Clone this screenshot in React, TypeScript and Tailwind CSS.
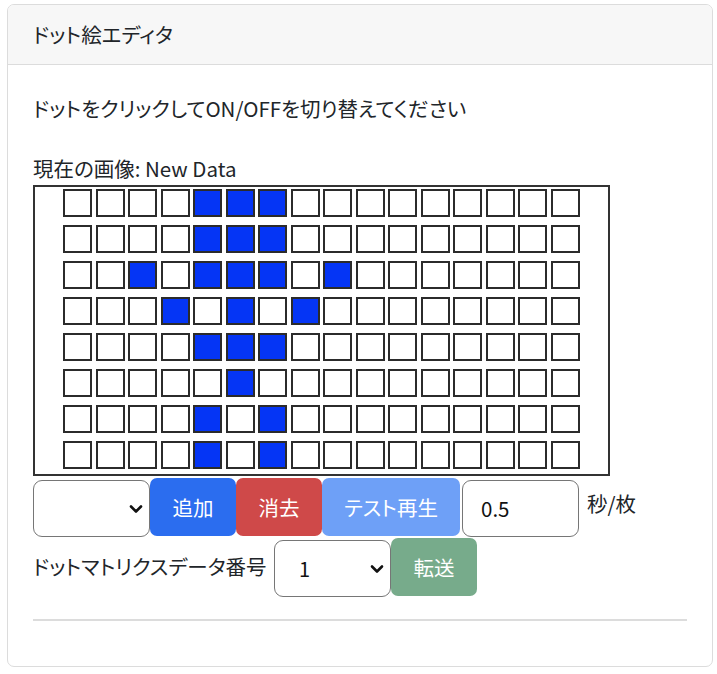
const ON: number[][] = [
  [4, 5, 6],
  [4, 5, 6],
  [2, 4, 5, 6, 8],
  [3, 5, 7],
  [4, 5, 6],
  [5],
  [4, 6],
  [4, 6],
];

function Chevron() {
  return (
    <svg width="14" height="10" viewBox="0 0 14 10" className="shrink-0">
      <path d="M2 2.5 L7 7.5 L12 2.5" fill="none" stroke="#111" strokeWidth="2.6" strokeLinecap="round" strokeLinejoin="round" />
    </svg>
  );
}

function Select({ value, className }: { value?: string; className?: string }) {
  return (
    <div
      className={`flex items-center justify-between rounded-[9px] border border-[#767676] bg-white pl-[24px] pr-[6px] ${className ?? ""}`}
    >
      <span className="text-[20px] text-[#111]">{value ?? ""}</span>
      <Chevron />
    </div>
  );
}

function DotGrid() {
  return (
    <div className="flex h-[291px] w-[577px] flex-col items-center gap-y-[8px] border-2 border-[#333] bg-white pt-[2px]">
      {ON.map((row, r) => (
        <div key={r} className="flex gap-x-[3.5px]">
          {Array.from({ length: 16 }, (_, c) => (
            <div
              key={c}
              className={`h-[28px] w-[29px] border-2 border-[#2b2b2b] ${row.includes(c) ? "bg-[#0535f5]" : "bg-white"}`}
            />
          ))}
        </div>
      ))}
    </div>
  );
}

export default function App() {
  return (
    <div className="min-h-[674px] bg-white pl-[7px] pt-[4px] font-['Noto_Sans_CJK_JP','Noto_Sans',sans-serif] text-[20.5px] text-[#212529] [font-feature-settings:'palt']">
      <div className="h-[663px] w-[706px] overflow-hidden rounded-[7px] border border-[#dcdcdc]">
        <div className="flex h-[60px] items-center border-b border-[#dcdcdc] bg-[#f7f7f7] px-[25px]">
          ドット絵エディタ
        </div>
        <div className="px-[25px] pt-[28px]">
          <p className="whitespace-nowrap leading-[30px]">ドットをクリックしてON/OFFを切り替えてください</p>
          <p className="mt-[30px] whitespace-nowrap leading-[30px]">現在の画像: New Data</p>
          <div className="mt-[2px]">
            <DotGrid />
          </div>
          <div className="flex items-start">
            <Select className="mt-[4px] h-[57px] w-[117px]" />
            <button className="mt-[2px] h-[58px] w-[86px] rounded-[7px] bg-[#2b6def] text-white">追加</button>
            <button className="mt-[2px] h-[58px] w-[86px] rounded-[7px] bg-[#cf4949] text-white">消去</button>
            <button className="mt-[2px] h-[58px] w-[138px] rounded-[7px] bg-[#6ea0f7] text-white">テスト再生</button>
            <div className="ml-[2px] mt-[4px] flex h-[57px] w-[117px] items-center rounded-[9px] border border-[#767676] bg-white px-[18px] text-[#111]">
              0.5
            </div>
            <span className="ml-[8px] mt-[12px] whitespace-nowrap leading-[30px]">秒/枚</span>
          </div>
          <div className="flex items-start">
            <span className="mt-[14px] w-[241px] whitespace-nowrap leading-[30px]">ドットマトリクスデータ番号</span>
            <Select value="1" className="mt-[3px] h-[57px] w-[117px]" />
            <button className="mt-[1px] h-[58px] w-[86px] rounded-[7px] bg-[#77ab8b] text-white">転送</button>
          </div>
          <hr className="mt-[22px] w-[654px] border-t-2 border-[#dcdcdc]" />
        </div>
      </div>
    </div>
  );
}
